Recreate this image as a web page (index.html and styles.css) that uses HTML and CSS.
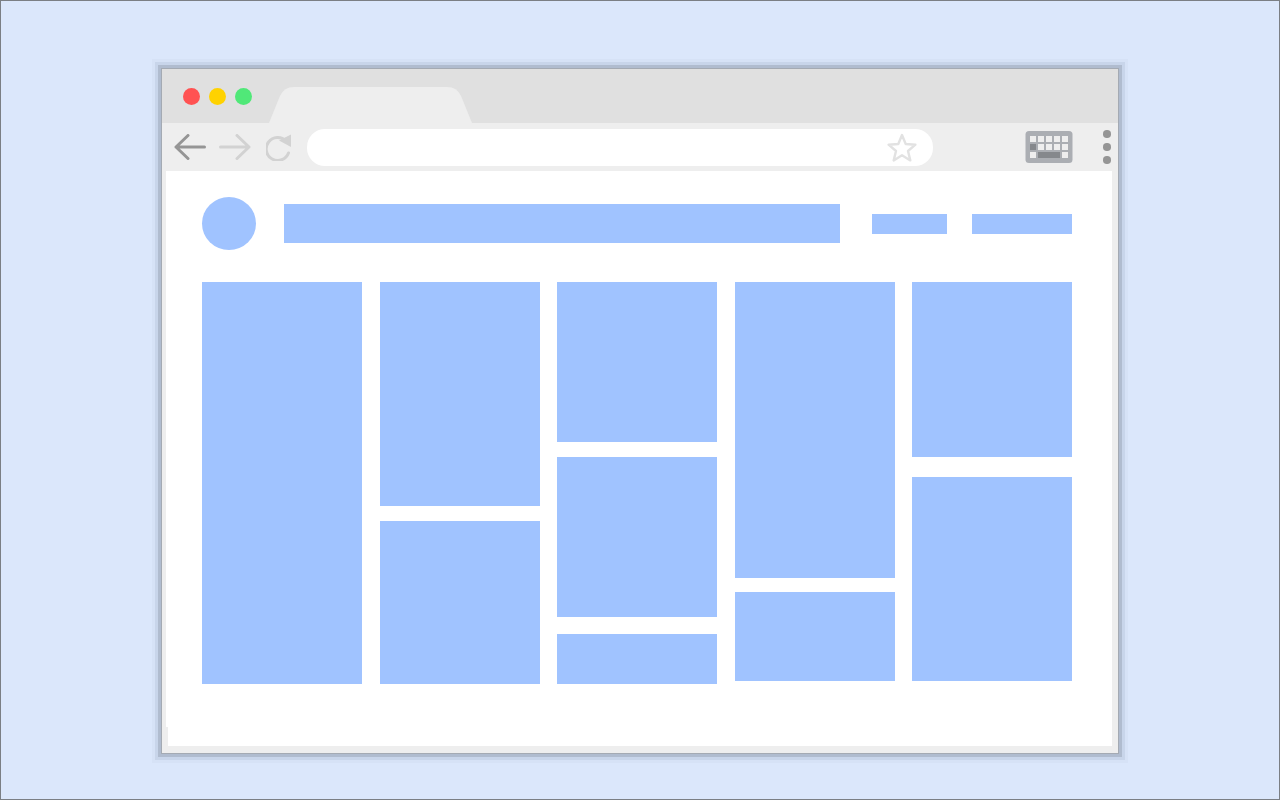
FILE: index.html
```html
<!DOCTYPE html>
<html lang="en">
<head>
    <meta charset="UTF-8">
    <title>Browser Layout</title>
    <link rel="stylesheet" href="styles.css">
</head>
<body>
    <div class="browser">
        <div class="titlebar">
            <div class="lights">
                <span class="light red"></span>
                <span class="light yellow"></span>
                <span class="light green"></span>
            </div>
            <svg class="tab" width="203" height="36" viewBox="0 0 203 36">
                <path d="M0 36 L11 9 Q15 0 25 0 L178 0 Q188 0 192 9 L203 36 Z" fill="#eeeeee"/>
            </svg>
        </div>
        <div class="toolbar">
            <svg class="nav-icon" width="32" height="26" viewBox="0 0 32 26">
                <path d="M14 1.5 L2 13 L14 24.5 M2 13 L30.5 13" fill="none" stroke="#959595" stroke-width="3" stroke-linecap="round" stroke-linejoin="round"/>
            </svg>
            <svg class="nav-icon forward" width="32" height="26" viewBox="0 0 32 26">
                <path d="M18 1.5 L30 13 L18 24.5 M30 13 L1.5 13" fill="none" stroke="#d2d2d2" stroke-width="3" stroke-linecap="round" stroke-linejoin="round"/>
            </svg>
            <svg class="nav-icon reload" width="26" height="27" viewBox="0 0 26 27">
                <path d="M20 7 A11.5 11.5 0 1 0 22.5 19" fill="none" stroke="#d2d2d2" stroke-width="3" stroke-linecap="round"/>
                <path d="M13 6.5 L25 0.5 L25 13 Z" fill="#d2d2d2"/>
            </svg>
            <div class="urlbar">
                <svg width="30" height="29" viewBox="0 0 30 29">
                    <path d="M15 2 L18.7 11 L28.4 11.7 L21 18 L23.3 27.4 L15 22.3 L6.7 27.4 L9 18 L1.6 11.7 L11.3 11 Z" fill="none" stroke="#e2e2e2" stroke-width="2.4" stroke-linejoin="round"/>
                </svg>
            </div>
            <svg class="keyboard" width="48" height="32" viewBox="0 0 48 32">
                <rect x="0.5" y="0" width="47" height="32" rx="3.5" fill="#abaeb3"/>
                <g fill="#eeeeee">
                    <rect x="5" y="5" width="6" height="6"/>
                    <rect x="13" y="5" width="6" height="6"/>
                    <rect x="21" y="5" width="6" height="6"/>
                    <rect x="29" y="5" width="6" height="6"/>
                    <rect x="37" y="5" width="6" height="6"/>
                    <rect x="13" y="13" width="6" height="6"/>
                    <rect x="21" y="13" width="6" height="6"/>
                    <rect x="29" y="13" width="6" height="6"/>
                    <rect x="37" y="13" width="6" height="6"/>
                    <rect x="5" y="21" width="6" height="6"/>
                    <rect x="37" y="21" width="6" height="6"/>
                </g>
                <g fill="#85888c">
                    <rect x="5" y="13" width="6" height="6"/>
                    <rect x="13" y="21" width="22" height="6"/>
                </g>
            </svg>
            <div class="dots">
                <span class="dot"></span>
                <span class="dot"></span>
                <span class="dot"></span>
            </div>
        </div>
        <div class="content">
            <div class="page-header">
                <div class="avatar"></div>
                <div class="search-block"></div>
                <div class="link-block short"></div>
                <div class="link-block long"></div>
            </div>
            <div class="columns">
                <div class="column">
                    <div class="tile h402"></div>
                </div>
                <div class="column gap15">
                    <div class="tile h224"></div>
                    <div class="tile h163"></div>
                </div>
                <div class="column gap15">
                    <div class="tile h160"></div>
                    <div class="tile h160"></div>
                    <div class="tile h50"></div>
                </div>
                <div class="column gap14">
                    <div class="tile h296"></div>
                    <div class="tile h89"></div>
                </div>
                <div class="column gap20">
                    <div class="tile h175"></div>
                    <div class="tile h204"></div>
                </div>
            </div>
        </div>
    </div>
</body>
</html>
```

FILE: styles.css
```css
* {
    box-sizing: border-box;
}
html, body {
    margin: 0;
    padding: 0;
}
body {
    width: 1280px;
    height: 800px;
    overflow: hidden;
    background-color: #dbe7fb;
    border: 1px solid #7b7f84;
    padding: 68px 0 0 161px;
    font-family: "Liberation Sans", Arial, sans-serif;
}
.browser {
    width: 956px;
    height: 684px;
    display: flex;
    flex-direction: column;
    background: #eeeeee;
    box-shadow: 0 0 0 1px #a4aab3,
        0 0 0 4px #b0bccf,
        0 0 0 7px #c8d5ea,
        0 0 0 10px #d6e2f6;
}
.titlebar {
    height: 54px;
    display: flex;
    align-items: flex-end;
    padding-left: 21px;
    background: #e0e0e0;
}
.lights {
    display: flex;
    gap: 9px;
    align-self: flex-start;
    margin-top: 19px;
}
.light {
    width: 17px;
    height: 17px;
    border-radius: 50%;
}
.red {
    background: #ff5252;
}
.yellow {
    background: #ffd200;
}
.green {
    background: #50e878;
}
.tab {
    display: block;
    margin-left: 17px;
}
.toolbar {
    height: 48px;
    display: flex;
    align-items: center;
    padding-left: 12px;
}
.nav-icon {
    flex: none;
}
.forward {
    margin-left: 13px;
}
.reload {
    margin-left: 15px;
}
.urlbar {
    width: 626px;
    height: 37px;
    margin-left: 15px;
    display: flex;
    align-items: center;
    justify-content: flex-end;
    padding-right: 16px;
    background: #ffffff;
    border-radius: 18px;
}
.keyboard {
    margin-left: 92px;
    flex: none;
}
.dots {
    display: flex;
    flex-direction: column;
    gap: 5.5px;
    margin-left: 30px;
}
.dot {
    width: 7.5px;
    height: 7.5px;
    border-radius: 50%;
    background: #959595;
}
.content {
    position: relative;
    width: 946px;
    height: 575px;
    margin-left: 4px;
    padding: 26px 40px 0 36px;
    background: #ffffff;
}
.content::after {
    content: "";
    position: absolute;
    left: 0;
    bottom: 0;
    width: 2px;
    height: 19px;
    background: #eeeeee;
}
.page-header {
    display: flex;
    align-items: center;
    height: 53px;
}
.avatar {
    width: 54px;
    height: 53px;
    border-radius: 50%;
    background: #a0c3ff;
}
.search-block {
    width: 556px;
    height: 39px;
    margin-left: 28px;
    background: #a0c3ff;
}
.link-block {
    height: 20px;
    background: #a0c3ff;
}
.short {
    width: 75px;
    margin-left: 32px;
}
.long {
    width: 100px;
    margin-left: 25px;
}
.columns {
    display: grid;
    grid-template-columns: repeat(5, 160px);
    column-gap: 17.6px;
    margin-top: 32px;
}
.column {
    display: flex;
    flex-direction: column;
}
.gap15 {
    gap: 15px;
}
.gap14 {
    gap: 14px;
}
.gap20 {
    gap: 20px;
}
.tile {
    background: #a0c3ff;
}
.h402 {
    height: 402px;
}
.h224 {
    height: 224px;
}
.h163 {
    height: 163px;
}
.h160 {
    height: 160px;
}
.h50 {
    height: 50px;
    margin-top: 2px;
}
.h296 {
    height: 296px;
}
.h89 {
    height: 89px;
}
.h175 {
    height: 175px;
}
.h204 {
    height: 204px;
}
```
